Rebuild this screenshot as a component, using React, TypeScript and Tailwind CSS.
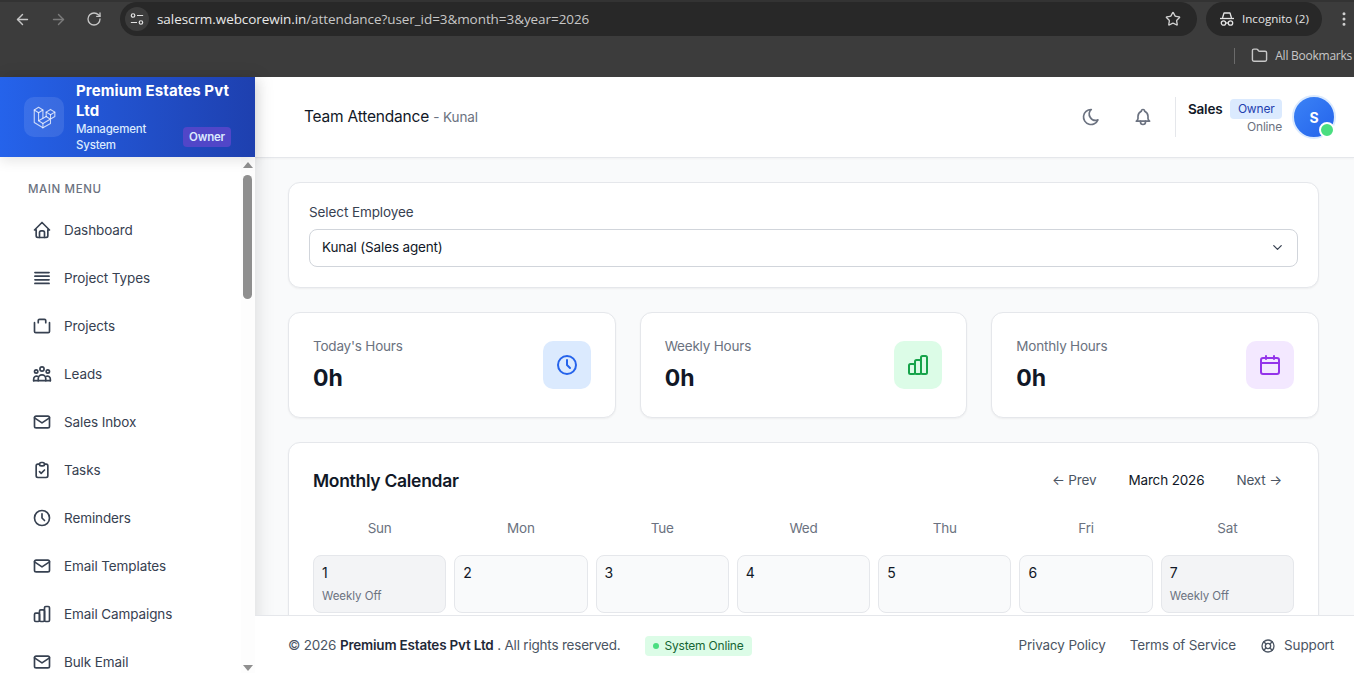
import React from 'react';
import { ArrowLeft, ArrowRight, RotateCw, Star, Folder, EllipsisVertical } from 'lucide-react';
import { TbBrandLaravel, TbHome, TbMail, TbClipboardCheck, TbClock, TbMoon, TbBell, TbLifebuoy, TbChevronDown } from 'react-icons/tb';

const font = "font-['Inter',sans-serif]";

type IconProps = { className?: string };

function LinesIcon({ className }: IconProps) {
  return (
    <svg viewBox="0 0 24 24" fill="none" stroke="currentColor" strokeWidth="2" strokeLinecap="round" className={className}>
      <path d="M3.500 5.500h17M3.500 9.800h17M3.500 14.200h17M3.500 18.500h17" />
    </svg>
  );
}

function BagIcon({ className }: IconProps) {
  return (
    <svg viewBox="0 0 24 24" fill="none" stroke="currentColor" strokeWidth="2" strokeLinecap="round" strokeLinejoin="round" className={className}>
      <path d="M7.500 8V5.500A1.500 1.500 0 0 1 9 4h6a1.500 1.500 0 0 1 1.500 1.500V8" />
      <path d="M3 8v10.500A1.500 1.500 0 0 0 4.500 20h15a1.500 1.500 0 0 0 1.500-1.500V8" />
    </svg>
  );
}

function GroupIcon({ className }: IconProps) {
  return (
    <svg viewBox="0 0 24 24" fill="none" stroke="currentColor" strokeWidth="2" strokeLinecap="round" strokeLinejoin="round" className={className}>
      <circle cx="12" cy="6" r="2.500" />
      <circle cx="5" cy="9" r="2" />
      <circle cx="19" cy="9" r="2" />
      <path d="M7.500 20v-2.500a4.500 4.500 0 0 1 9 0V20" />
      <path d="M2 20v-2a3.500 3.500 0 0 1 4.500-3.300M22 20v-2a3.500 3.500 0 0 0-4.500-3.300" />
      <path d="M2 20h20" />
    </svg>
  );
}

function BarsIcon({ className }: IconProps) {
  return (
    <svg viewBox="0 0 24 24" fill="none" stroke="currentColor" strokeWidth="2" strokeLinejoin="round" className={className}>
      <rect x="3" y="11" width="6" height="10" rx="1.500" />
      <rect x="9" y="7" width="6" height="14" rx="1.500" />
      <rect x="15" y="3" width="6" height="18" rx="1.500" />
    </svg>
  );
}

function CalendarIcon({ className }: IconProps) {
  return (
    <svg viewBox="0 0 24 24" fill="none" stroke="currentColor" strokeWidth="2" strokeLinecap="round" strokeLinejoin="round" className={className}>
      <rect x="3" y="5" width="18" height="16" rx="2" />
      <path d="M8 3v3M16 3v3M3 10h18" />
    </svg>
  );
}

function TuneIcon() {
  return (
    <svg viewBox="0 0 16 16" fill="none" stroke="#e3e3e3" strokeWidth="1.400" className="w-[14px] h-[14px]">
      <circle cx="3.500" cy="4" r="2" />
      <path d="M8 4h7M1 12h7" />
      <circle cx="12.500" cy="12" r="2" />
    </svg>
  );
}

function IncognitoIcon() {
  return (
    <svg viewBox="0 0 16 16" fill="none" stroke="#e3e3e3" strokeWidth="1.300" strokeLinejoin="round" className="w-[16px] h-[16px]">
      <path d="M3.500 7L5 2h6l1.500 5" />
      <path d="M1 7.500h14" />
      <circle cx="4.500" cy="12" r="2.200" />
      <circle cx="11.500" cy="12" r="2.200" />
      <path d="M6.700 12h2.600" />
    </svg>
  );
}

const menu = [
  { label: 'Dashboard', icon: TbHome },
  { label: 'Project Types', icon: LinesIcon },
  { label: 'Projects', icon: BagIcon },
  { label: 'Leads', icon: GroupIcon },
  { label: 'Sales Inbox', icon: TbMail },
  { label: 'Tasks', icon: TbClipboardCheck },
  { label: 'Reminders', icon: TbClock },
  { label: 'Email Templates', icon: TbMail },
  { label: 'Email Campaigns', icon: BarsIcon },
  { label: 'Bulk Email', icon: TbMail },
];

const stats = [
  { label: "Today's Hours", icon: TbClock, box: 'bg-[#dbeafe]', color: 'text-[#2563eb]' },
  { label: 'Weekly Hours', icon: BarsIcon, box: 'bg-[#dcfce7]', color: 'text-[#16a34a]' },
  { label: 'Monthly Hours', icon: CalendarIcon, box: 'bg-[#f3e8ff]', color: 'text-[#9333ea]' },
];

const days = ['Sun', 'Mon', 'Tue', 'Wed', 'Thu', 'Fri', 'Sat'];
const dates = [1, 2, 3, 4, 5, 6, 7];

function BrowserBar() {
  return (
    <div className="h-[77px] shrink-0 bg-[#3c3c3c] font-['Open_Sans',sans-serif]">
      <div className="h-[2px] bg-[#333333]" />
      <div className="h-[34px] flex items-center">
        <div className="w-[120px] pl-[14px] flex items-center gap-[19px] text-[#c7c7c7]">
          <ArrowLeft className="w-[17px] h-[17px]" />
          <ArrowRight className="w-[17px] h-[17px] text-[#7b7b7b]" />
          <RotateCw className="w-[16px] h-[16px]" />
        </div>
        <div className="w-[1077px] h-[34px] rounded-full bg-[#282828] flex items-center pl-[5px] pr-[16px]">
          <div className="w-[24px] h-[24px] rounded-full bg-[#3c3c3c] flex items-center justify-center">
            <TuneIcon />
          </div>
          <div className="ml-[8px] text-[13.5px] text-[#c7c7c7] tracking-[-0.07px] whitespace-nowrap">
            <span className="text-[#e8e8e8]">salescrm.webcorewin.in</span>/attendance?user_id=3&amp;month=3&amp;year=2026
          </div>
          <Star className="ml-auto w-[16px] h-[16px] text-[#d0d0d0]" />
        </div>
        <div className="ml-[9px] w-[116px] h-[34px] rounded-full bg-[#282828] flex items-center pl-[13px] gap-[7px] text-[11.6px] text-[#e3e3e3] whitespace-nowrap">
          <IncognitoIcon />
          Incognito (2)
        </div>
        <EllipsisVertical className="ml-[13px] w-[18px] h-[18px] text-[#d0d0d0]" />
      </div>
      <div className="h-[41px] flex items-center justify-end pb-[2px]">
        <div className="w-px h-[16px] bg-[#6b6b6b] mr-[16px]" />
        <Folder className="w-[17px] h-[17px] text-[#c7c7c7] mr-[7px]" />
        <span className="text-[12px] text-[#c7c7c7] whitespace-nowrap tracking-[-0.25px] mr-[2px]">All Bookmarks</span>
      </div>
    </div>
  );
}

function Sidebar() {
  return (
    <aside className="w-[255px] shrink-0 flex flex-col bg-white shadow-[4px_0_16px_rgba(0,0,0,0.1)] z-10">
      <div className="relative z-10 h-[80px] shrink-0 bg-gradient-to-r from-[#2563eb] to-[#1e40af] flex items-center pl-[24px] pr-[24px] gap-[12px] shadow-[0_4px_12px_rgba(0,0,0,0.1)]">
        <div className="w-[40px] h-[40px] shrink-0 rounded-[10px] bg-white/10 flex items-center justify-center">
          <TbBrandLaravel strokeWidth={1} className="w-[26px] h-[26px] text-white/75" />
        </div>
        <div className="flex-1 min-w-0">
          <div className="text-[15px] leading-[20px] font-bold text-white tracking-[0.1px]">Premium Estates Pvt Ltd</div>
          <div className="flex items-center justify-between">
            <div className="text-[11.5px] leading-[16px] font-medium text-[#dbeafe] w-[90px] tracking-[-0.2px]">Management System</div>
            <span className="rounded-[4px] bg-[#5146c8] px-[6px] py-[2px] text-[11.5px] leading-[16px] font-semibold text-[#dbeafe] tracking-[-0.2px]">Owner</span>
          </div>
        </div>
      </div>
      <div className="flex-1 min-h-0 flex">
        <nav className="w-[241px] overflow-hidden pt-[24px] pl-[28px]">
          <div className="text-[11.5px] leading-[16px] font-medium tracking-[0.6px] text-[#6b7280]">MAIN MENU</div>
          <ul className="mt-[9px] -ml-[1px]">
            {menu.map((item) => (
              <li key={item.label} className="h-[48px] flex items-center gap-[12px] pl-[5px] text-[#374151]">
                <item.icon className="w-[20px] h-[20px] shrink-0 text-[#374151]" />
                <span className="text-[13.5px] tracking-[-0.1px] whitespace-nowrap">{item.label}</span>
              </li>
            ))}
          </ul>
        </nav>
        <div className="w-[14px] flex flex-col items-center bg-[#fdfdfd] pt-[5px] pb-[1px] pr-[1px]">
          <div className="w-0 h-0 border-x-[5px] border-x-transparent border-b-[6px] border-b-[#8f8f8f]" />
          <div className="mt-[7px] w-[9px] h-[124px] rounded-full bg-[#8f8f8f]" />
          <div className="mt-auto mb-[1px] w-0 h-0 border-x-[5px] border-x-transparent border-t-[6px] border-t-[#8f8f8f]" />
        </div>
      </div>
    </aside>
  );
}

function Topbar() {
  return (
    <header className="h-[81px] shrink-0 bg-white border-b border-[#e5e7eb] flex items-center pl-[49px] pr-[18px] shadow-[0_1px_2px_rgba(0,0,0,0.04)]">
      <h1 className="text-[15.5px] text-[#111827] tracking-[-0.2px]">
        Team Attendance <span className="text-[13.5px] text-[#6b7280] tracking-[-0.1px]">- Kunal</span>
      </h1>
      <div className="ml-auto flex items-center">
        <TbMoon className="w-[20px] h-[20px] text-[#6b7280] mr-[32px]" />
        <TbBell className="w-[20px] h-[20px] text-[#6b7280] mr-[22px]" />
        <div className="w-px h-[40px] bg-[#e5e7eb] mr-[12px]" />
        <div className="flex flex-col items-end mr-[10px]">
          <div className="flex items-center gap-[8px]">
            <span className="text-[13.5px] font-semibold text-[#111827] tracking-[-0.2px]">Sales</span>
            <span className="h-[20px] px-[7.5px] rounded-[4px] bg-[#dbeafe] text-[12px] leading-[20px] text-[#1e40af] tracking-[-0.2px]">Owner</span>
          </div>
          <span className="text-[12px] leading-[16px] text-[#6b7280] tracking-[-0.2px]">Online</span>
        </div>
        <div className="relative w-[44px] h-[44px] rounded-full bg-gradient-to-br from-[#3b82f6] to-[#2563eb] border-2 border-[#dbeafe] flex items-center justify-center text-[14px] font-bold text-white">
          S
          <span className="absolute -right-[1px] -bottom-[1px] w-[16px] h-[16px] rounded-full bg-[#4ade80] border-2 border-white" />
        </div>
      </div>
    </header>
  );
}

function Calendar() {
  return (
    <section className="rounded-[12px] border border-[#e5e7eb] bg-white shadow-[0_1px_2px_rgba(0,0,0,0.05)] px-[24px] pt-[24px] pb-[24px]">
      <div className="flex items-center justify-between h-[28px] mb-[23px]">
        <h2 className="text-[17.5px] font-semibold text-[#111827] tracking-[-0.3px]">Monthly Calendar</h2>
        <div className="flex items-center text-[13.5px] tracking-[-0.15px] pr-[12px] pb-[2px]">
          <span className="text-[#4b5563]">← Prev</span>
          <span className="ml-[32px] text-[#111827]">March 2026</span>
          <span className="ml-[32px] text-[#4b5563]">Next →</span>
        </div>
      </div>
      <div className="grid grid-cols-7 gap-x-[8px] mb-[17px]">
        {days.map((d) => (
          <div key={d} className="h-[20px] text-center text-[13.5px] leading-[20px] tracking-[-0.2px] text-[#6b7280]">{d}</div>
        ))}
      </div>
      <div className="grid grid-cols-7 gap-[8px]">
        {dates.map((d) => {
          const off = d === 1 || d === 7;
          return (
            <div key={d} className={`h-[58px] rounded-[8px] border border-[#e5e7eb] pl-[8px] pt-[7px] ${off ? 'bg-[#f3f4f6]' : 'bg-[#f9fafb]'}`}>
              <div className="text-[14px] leading-[20px] text-[#111827]">{d}</div>
              {off && <div className="mt-[5px] text-[11.5px] leading-[16px] text-[#6b7280] tracking-[-0.05px]">Weekly Off</div>}
            </div>
          );
        })}
      </div>
    </section>
  );
}

function Footer() {
  return (
    <footer className="h-[58px] shrink-0 bg-white border-t border-[#e5e7eb] flex items-center pt-[2px] pl-[33px] pr-[20px] text-[13.5px] text-[#4b5563] z-10">
      <span className="tracking-[-0.2px]">
        © 2026 <span className="font-semibold text-[#1f2937]">Premium Estates Pvt Ltd</span> . All rights reserved.
      </span>
      <span className="ml-[24px] h-[20px] px-[8px] rounded-[4px] bg-[#dcfce7] flex items-center gap-[6px] text-[12px] tracking-[-0.2px] text-[#166534]">
        <span className="w-[6px] h-[6px] rounded-full bg-[#4ade80]" />
        System Online
      </span>
      <div className="ml-auto flex items-center gap-[24px] tracking-[-0.15px]">
        <span>Privacy Policy</span>
        <span>Terms of Service</span>
        <span className="flex items-center gap-[8px]">
          <TbLifebuoy className="w-[16px] h-[16px]" />
          Support
        </span>
      </div>
    </footer>
  );
}

export default function App() {
  return (
    <div className={`h-screen flex flex-col overflow-hidden bg-[#f9fafb] ${font}`}>
      <BrowserBar />
      <div className="flex-1 min-h-0 flex">
        <Sidebar />
        <div className="flex-1 min-w-0 flex flex-col">
          <Topbar />
          <main className="flex-1 min-h-0 overflow-hidden pl-[33px] pr-[35px] pt-[24px]">
            <section className="h-[106px] rounded-[12px] border border-[#e5e7eb] bg-white shadow-[0_1px_2px_rgba(0,0,0,0.05)] px-[20px] pt-[19px]">
              <label className="block text-[13.5px] leading-[20px] tracking-[-0.1px] text-[#374151]">Select Employee</label>
              <div className="mt-[7px] h-[38px] rounded-[8px] border border-[#d1d5db] bg-white flex items-center justify-between pb-[2px] pl-[12px] pr-[12px] text-[13.5px] tracking-[-0.15px] text-[#111827]">
                Kunal (Sales agent)
                <TbChevronDown className="w-[15px] h-[15px] text-[#374151]" />
              </div>
            </section>
            <div className="grid grid-cols-3 gap-[24px] mt-[24px] mb-[24px]">
              {stats.map((s) => (
                <div key={s.label} className="h-[106px] rounded-[12px] border border-[#e5e7eb] bg-white shadow-[0_1px_2px_rgba(0,0,0,0.05)] px-[24px] flex items-center justify-between">
                  <div>
                    <div className="text-[13.5px] leading-[20px] tracking-[-0.2px] text-[#6b7280]">{s.label}</div>
                    <div className="mt-[6px] text-[23px] leading-[32px] font-bold text-[#111827]">0h</div>
                  </div>
                  <div className={`w-[48px] h-[48px] rounded-[10px] flex items-center justify-center ${s.box}`}>
                    <s.icon className={`w-[24px] h-[24px] ${s.color}`} />
                  </div>
                </div>
              ))}
            </div>
            <Calendar />
          </main>
          <Footer />
        </div>
      </div>
    </div>
  );
}
